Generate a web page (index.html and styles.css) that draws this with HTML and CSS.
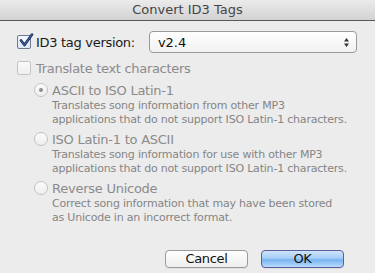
FILE: index.html
```html
<!DOCTYPE html>
<html>
<head>
<meta charset="utf-8">
<link rel="stylesheet" href="styles.css">
</head>
<body>
<div class="dialog">
  <div class="titlebar">Convert ID3 Tags</div>
  <div class="content">
    <div class="row version-row">
      <span class="checkbox checked">
        <svg width="16" height="16" viewBox="0 0 16 16"><path d="M3 7.5 L6.5 12 L14 1.5" fill="none" stroke="#1c2a50" stroke-width="2.6" stroke-linecap="round" stroke-linejoin="round"/><path d="M3 7.5 L6.5 12 L14 1.5" fill="none" stroke="#3f6fc4" stroke-width="1" stroke-linecap="round" stroke-linejoin="round"/></svg>
      </span>
      <span class="label">ID3 tag version:</span>
      <div class="popup">
        <span class="popup-value">v2.4</span>
        <svg class="arrows" width="7" height="11" viewBox="0 0 7 11"><path d="M3.5 1 L6 4.5 L1 4.5 Z M3.5 10 L6 6.5 L1 6.5 Z" fill="#333"/></svg>
      </div>
    </div>
    <div class="row translate-row">
      <span class="checkbox disabled"></span>
      <span class="label disabled-text">Translate text characters</span>
    </div>
    <div class="options">
      <div class="option">
        <div class="option-head"><span class="radio selected"><span class="dot"></span></span><span class="option-title">ASCII to ISO Latin-1</span></div>
        <div class="desc">Translates song information from other MP3<br>applications that do not support ISO Latin-1 characters.</div>
      </div>
      <div class="option">
        <div class="option-head"><span class="radio"></span><span class="option-title">ISO Latin-1 to ASCII</span></div>
        <div class="desc">Translates song information for use with other MP3<br>applications that do not support ISO Latin-1 characters.</div>
      </div>
      <div class="option">
        <div class="option-head"><span class="radio"></span><span class="option-title">Reverse Unicode</span></div>
        <div class="desc">Correct song information that may have been stored<br>as Unicode in an incorrect format.</div>
      </div>
    </div>
    <div class="buttons">
      <button class="btn">Cancel</button>
      <button class="btn default">OK</button>
    </div>
  </div>
</div>
</body>
</html>
```

FILE: styles.css
```css
html, body {
  margin: 0;
  padding: 0;
  background: #ececec;
}
body {
  width: 375px;
  height: 273px;
  overflow: hidden;
  font-family: "DejaVu Sans", "Liberation Sans", sans-serif;
}
.dialog {
  width: 375px;
  height: 273px;
  display: flex;
  flex-direction: column;
}
.titlebar {
  height: 20px;
  line-height: 20px;
  text-align: center;
  font-size: 13px;
  color: #454545;
  background: linear-gradient(#ebebeb, #d2d2d2);
  border-bottom: 1px solid #595959;
  flex-shrink: 0;
}
.content {
  padding: 10px 18px 0 17px;
  display: flex;
  flex-direction: column;
}
.row {
  display: flex;
  align-items: center;
}
.version-row {
  height: 22px;
}
.checkbox {
  width: 12px;
  height: 12px;
  border: 1px solid #8a8a8a;
  border-radius: 2px;
  background: linear-gradient(#ffffff, #e8e8e8);
  position: relative;
  flex-shrink: 0;
}
.checkbox.checked {
  border-color: #6f7a8c;
  background: linear-gradient(#f4f8ff, #dbe6f5);
}
.checkbox.checked svg {
  position: absolute;
  left: 0;
  top: -3px;
}
.checkbox.disabled {
  border-color: #c4c4c4;
  background: linear-gradient(#fafafa, #efefef);
}
.label {
  font-size: 13px;
  letter-spacing: -0.3px;
  color: #1a1a1a;
  margin-left: 5px;
}
.disabled-text {
  color: #8b8b8b;
}
.popup {
  margin-left: 14px;
  flex: 1;
  height: 20px;
  border: 1px solid #9a9a9a;
  border-radius: 4px;
  background: linear-gradient(#ffffff, #f1f1f1);
  display: flex;
  align-items: center;
  justify-content: space-between;
  padding: 0 6px 0 8px;
}
.popup-value {
  font-size: 13px;
  color: #111;
}
.translate-row {
  margin-top: 7px;
  height: 16px;
}
.options {
  margin-left: 17px;
  margin-top: 2px;
  display: flex;
  flex-direction: column;
}
.option {
  margin-top: 3px;
}
.option-head {
  display: flex;
  align-items: center;
  height: 18px;
}
.radio {
  width: 12px;
  height: 12px;
  border: 1px solid #c2c2c2;
  border-radius: 50%;
  background: linear-gradient(#fbfbfb, #eeeeee);
  display: flex;
  align-items: center;
  justify-content: center;
  flex-shrink: 0;
}
.radio .dot {
  width: 4px;
  height: 4px;
  border-radius: 50%;
  background: #8d8d8d;
}
.option-title {
  font-size: 13px;
  letter-spacing: -0.25px;
  color: #8b8b8b;
  margin-left: 4px;
}
.desc {
  margin-left: 18px;
  font-size: 11px;
  line-height: 14px;
  letter-spacing: -0.2px;
  white-space: nowrap;
  color: #858585;
}
.buttons {
  display: flex;
  justify-content: flex-end;
  gap: 13px;
  margin-top: 25px;
  padding-right: 13px;
}
.btn {
  width: 83px;
  height: 18px;
  padding: 0;
  font-family: "DejaVu Sans", "Liberation Sans", sans-serif;
  font-size: 13px;
  line-height: 16px;
  letter-spacing: -0.3px;
  color: #111;
  border: 1px solid #9b9b9b;
  border-radius: 4px;
  background: linear-gradient(#ffffff, #eeeeee);
  box-shadow: 0 1px 0 rgba(0,0,0,0.06);
}
.btn.default {
  border-color: #5a5e9e;
  background: linear-gradient(#cfe4fb 0%, #a6cef6 45%, #78b3f0 55%, #b8dcfc 100%);
}
```
